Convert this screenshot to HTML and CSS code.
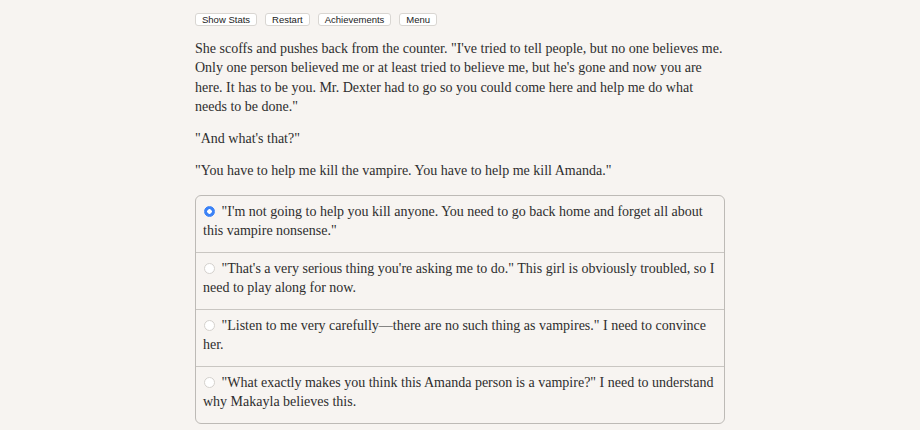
FILE: index.html
```html
<!DOCTYPE html>
<html lang="en">
<head>
    <meta charset="UTF-8">
    <title>Choice of Games</title>
    <link rel="stylesheet" href="styles.css">
</head>
<body>
<div class="container">
    <div class="buttons">
        <button class="btn">Show Stats</button>
        <button class="btn">Restart</button>
        <button class="btn">Achievements</button>
        <button class="btn">Menu</button>
    </div>

    <div class="text">
        <p>She scoffs and pushes back from the counter. "I've tried to tell people, but no one believes me. Only one person believed me or at least tried to believe me, but he's gone and now you are here. It has to be you. Mr. Dexter had to go so you could come here and help me do what needs to be done."</p>
        <p>"And what's that?"</p>
        <p>"You have to help me kill the vampire. You have to help me kill Amanda."</p>
    </div>

    <!-- Choices -->
    <form class="choices">
        <label class="choice">
            <input type="radio" name="choice" checked>
            "I'm not going to help you kill anyone. You need to go back home and forget all about this vampire nonsense."
        </label>
        <label class="choice">
            <input type="radio" name="choice">
            "That's a very serious thing you're asking me to do." This girl is obviously troubled, so I need to play along for now.
        </label>
        <label class="choice">
            <input type="radio" name="choice">
            "Listen to me very carefully—there are no such thing as vampires." I need to convince her.
        </label>
        <label class="choice">
            <input type="radio" name="choice">
            "What exactly makes you think this Amanda person is a vampire?" I need to understand why Makayla believes this.
        </label>
    </form>
</div>
</body>
</html>
```

FILE: styles.css
```css
body {
    margin: 0;
    background: #f7f4f1;
    color: #2e2e2e;
    font-family: "Liberation Serif", "Times New Roman", serif;
    font-size: 14px;
    line-height: 19.3px;
}
.container {
    width: 530px;
    margin: 0 auto;
    padding-top: 13px;
}
.buttons {
    display: flex;
    gap: 8px;
    margin-bottom: 13px;
}
.btn {
    font-family: "Liberation Sans", Arial, sans-serif;
    font-size: 9.5px;
    line-height: 11px;
    padding: 0 6px;
    background: #fff;
    color: #222;
    border: 1px solid #d9d6d2;
    border-radius: 3px;
}
.text p {
    margin: 0 0 13px;
}
.choices {
    margin-top: 14px;
    border: 1px solid #bdbab6;
    border-radius: 6px;
    overflow: hidden;
}
.choice {
    display: block;
    padding: 6px 8px 11.5px 7px;
    border-top: 1px solid #c9c6c2;
}
.choice:first-child {
    border-top: none;
}
.choice input {
    appearance: none;
    width: 11px;
    height: 11px;
    margin: 0 3px 0 1px;
    vertical-align: -1px;
    border: 1px solid #d4d1cd;
    border-radius: 50%;
    background: #fff;
}
.choice input:checked {
    border-color: #3b82f6;
    background: radial-gradient(circle, #fff 0 2px, #3b82f6 2.5px);
}
```
